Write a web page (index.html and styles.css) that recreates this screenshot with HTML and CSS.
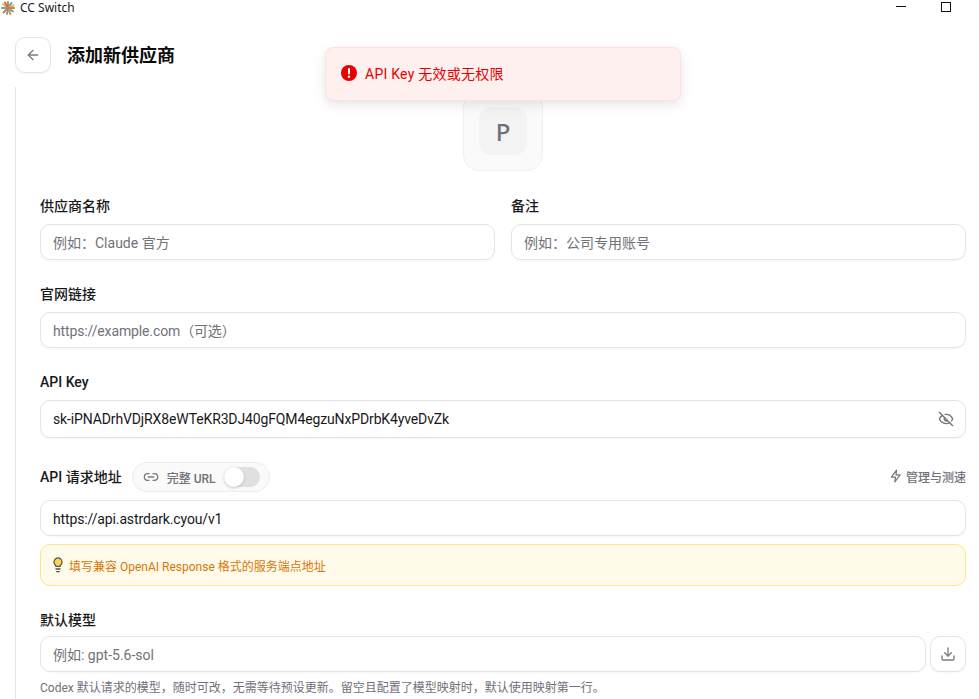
FILE: index.html
```html
<!DOCTYPE html>
<html lang="zh-CN">
<head>
  <meta charset="UTF-8">
  <meta name="viewport" content="width=device-width, initial-scale=1.0">
  <title>CC Switch</title>
  <link rel="stylesheet" href="styles.css">
</head>
<body>
  <div class="titlebar">
    <div class="app-name">
      <svg class="app-logo" width="14" height="14" viewBox="0 0 14 14" fill="none" stroke-width="2" stroke-linecap="round">
        <path d="M7 7V1" stroke="#e0803a"/>
        <path d="M7 7l3.500-5" stroke="#5f9ea8"/>
        <path d="M7 7l5.500-2.500" stroke="#f0b060"/>
        <path d="M7 7h6" stroke="#e07a3a"/>
        <path d="M7 7l5 3.500" stroke="#6aa5ad"/>
        <path d="M7 7l2.500 6" stroke="#e8953f"/>
        <path d="M7 7l-1 6" stroke="#6aa5ad"/>
        <path d="M7 7l-4.500 4.500" stroke="#e07a3a"/>
        <path d="M7 7H1" stroke="#6aa5ad"/>
        <path d="M7 7L2 3" stroke="#f0b060"/>
        <path d="M7 7L4 1.500" stroke="#b9785a"/>
      </svg>
      <span>CC Switch</span>
    </div>
    <div class="window-controls">
      <span class="win-min"></span>
      <span class="win-max"></span>
    </div>
  </div>

  <div class="page-header">
    <button class="back-btn">
      <svg width="16" height="16" viewBox="0 0 24 24" fill="none" stroke="#7a7a82" stroke-width="2" stroke-linecap="round" stroke-linejoin="round">
        <path d="M19 12H5"/>
        <path d="M12 19l-7-7 7-7"/>
      </svg>
    </button>
    <h1>添加新供应商</h1>
  </div>

  <div class="toast">
    <svg width="18" height="18" viewBox="0 0 18 18">
      <circle cx="9" cy="9" r="8" fill="#e60000"/>
      <rect x="8" y="4" width="2" height="6.500" rx="1" fill="#fff"/>
      <circle cx="9" cy="12.800" r="1.200" fill="#fff"/>
    </svg>
    <span>API Key 无效或无权限</span>
  </div>

  <div class="form-scroll">
    <div class="avatar-wrap">
      <div class="avatar-outer">
        <div class="avatar-inner">P</div>
      </div>
    </div>

    <div class="two-col">
      <div class="field">
        <label class="field-label">供应商名称</label>
        <input class="text-input" placeholder="例如：Claude 官方">
      </div>
      <div class="field">
        <label class="field-label">备注</label>
        <input class="text-input" placeholder="例如：公司专用账号">
      </div>
    </div>

    <div class="field">
      <label class="field-label">官网链接</label>
      <input class="text-input latin-input" placeholder="https://example.com（可选）">
    </div>

    <div class="field">
      <label class="field-label">API Key</label>
      <div class="input-with-icon">
        <input class="text-input latin-input key-input" value="sk-iPNADrhVDjRX8eWTeKR3DJ40gFQM4egzuNxPDrbK4yveDvZk">
        <svg class="eye-icon" width="16" height="16" viewBox="0 0 24 24" fill="none" stroke="#73737b" stroke-width="2" stroke-linecap="round" stroke-linejoin="round">
          <path d="M10.700 5.100A11 11 0 0 1 22 12a13 13 0 0 1-1.700 2.700"/>
          <path d="M14.100 14.200a3 3 0 0 1-4.200-4.200"/>
          <path d="M17.500 17.500A11 11 0 0 1 2 12a13 13 0 0 1 4.500-5.500"/>
          <path d="M2 2l20 20"/>
        </svg>
      </div>
    </div>

    <div class="field">
      <div class="url-head">
        <label class="field-label">API 请求地址</label>
        <div class="url-toggle">
          <svg width="16" height="16" viewBox="0 0 24 24" fill="none" stroke="#7a7a82" stroke-width="2" stroke-linecap="round">
            <path d="M9 17H7A5 5 0 0 1 7 7h2"/>
            <path d="M15 7h2a5 5 0 0 1 0 10h-2"/>
            <path d="M8 12h8"/>
          </svg>
          <span>完整 URL</span>
          <span class="switch"><span class="switch-thumb"></span></span>
        </div>
        <a class="manage-link">
          <svg width="14" height="14" viewBox="0 0 24 24" fill="none" stroke="#73737b" stroke-width="2" stroke-linecap="round" stroke-linejoin="round">
            <path d="M13 2L4 14h7l-1 8 9-12h-7z"/>
          </svg>
          管理与测速
        </a>
      </div>
      <input class="text-input latin-input" value="https://api.astrdark.cyou/v1">
      <div class="tip">
        <svg class="tip-bulb" width="16" height="16" viewBox="0 0 24 24" fill="#fcd34d" stroke="#57534e" stroke-width="2" stroke-linecap="round" stroke-linejoin="round">
          <path d="M15 14c.2-1 .7-1.700 1.500-2.500A6 6 0 1 0 7.500 11.500c.7.700 1.300 1.500 1.500 2.500z"/>
          <path d="M9 18h6"/>
          <path d="M10 22h4"/>
        </svg>
        <span>填写兼容 OpenAI Response 格式的服务端点地址</span>
      </div>
    </div>

    <div class="field field-model">
      <label class="field-label">默认模型</label>
      <div class="model-row">
        <input class="text-input" placeholder="例如: gpt-5.6-sol">
        <button class="fetch-btn">
          <svg width="16" height="16" viewBox="0 0 24 24" fill="none" stroke="#7a7a82" stroke-width="2" stroke-linecap="round" stroke-linejoin="round">
            <path d="M12 3v12"/>
            <path d="M7 10l5 5 5-5"/>
            <path d="M21 15v4a2 2 0 0 1-2 2H5a2 2 0 0 1-2-2v-4"/>
          </svg>
        </button>
      </div>
      <p class="hint">Codex 默认请求的模型，随时可改，无需等待预设更新。留空且配置了模型映射时，默认使用映射第一行。</p>
    </div>
  </div>
</body>
</html>
```

FILE: styles.css
```css
* {
  box-sizing: border-box;
}

html, body {
  height: 100%;
}

body {
  margin: 0;
  height: 699px;
  overflow: hidden;
  background-color: #fff;
  color: #111;
  font-family: Roboto, "Noto Sans CJK SC", sans-serif;
  font-size: 14px;
}

.titlebar {
  display: flex;
  justify-content: space-between;
  height: 37px;
}

.app-name {
  display: flex;
  align-items: flex-start;
  gap: 5px;
  padding-left: 1px;
  font-family: "Noto Sans", sans-serif;
  font-size: 12px;
  line-height: 15px;
  color: #1a1a1a;
}

.app-logo {
  margin-top: 1px;
}

.window-controls {
  position: relative;
  width: 100px;
}

.win-min {
  position: absolute;
  left: 17px;
  top: 6px;
  width: 10px;
  height: 1px;
  background-color: #111;
}

.win-max {
  position: absolute;
  left: 62px;
  top: 2px;
  width: 10px;
  height: 10px;
  border: 1px solid #111;
}

.page-header {
  display: flex;
  align-items: center;
  gap: 16px;
  height: 36px;
  padding-left: 15px;
}

.page-header h1 {
  margin: 0 0 2px;
  font-size: 18px;
  font-weight: 700;
  color: #0a0a0a;
}

.back-btn, .fetch-btn {
  display: flex;
  align-items: center;
  justify-content: center;
  width: 36px;
  height: 36px;
  padding: 0;
  flex-shrink: 0;
  background-color: #fff;
  border: 1px solid #e4e4e7;
  border-radius: 10px;
  box-shadow: 0 1px 2px rgba(0, 0, 0, 0.04);
}

.toast {
  position: absolute;
  left: 325px;
  top: 47px;
  display: flex;
  align-items: center;
  gap: 7px;
  width: 356px;
  height: 54px;
  padding-left: 14px;
  padding-bottom: 2px;
  background-color: #fff0f0;
  border: 1px solid #ffe0e1;
  border-radius: 8px;
  box-shadow: 0 4px 12px rgba(0, 0, 0, 0.1);
  color: #e60000;
  font-size: 14px;
  letter-spacing: 0.25px;
  z-index: 2;
}

.form-scroll {
  margin: 14px 13px 0 15px;
  padding-left: 24px;
  height: 612px;
  overflow: hidden;
  border-left: 1px solid #e4e4e7;
}

.avatar-wrap {
  display: flex;
  justify-content: center;
  height: 109px;
  padding-top: 4px;
}

.avatar-outer {
  display: flex;
  align-items: center;
  justify-content: center;
  width: 80px;
  height: 80px;
  background-color: #fafafa;
  border: 1px solid #f0f0f1;
  border-radius: 16px;
}

.avatar-inner {
  display: flex;
  align-items: center;
  justify-content: center;
  width: 48px;
  height: 48px;
  padding-top: 1px;
  background-color: #f3f3f4;
  border-radius: 12px;
  color: #71717a;
  font-family: "Noto Sans", sans-serif;
  font-size: 24px;
  font-weight: 500;
}

.two-col {
  display: grid;
  grid-template-columns: 1fr 1fr;
  gap: 16px;
}

.field {
  display: flex;
  flex-direction: column;
  gap: 8px;
  margin-bottom: 24px;
}

.field-label {
  font-size: 14px;
  line-height: 20px;
  font-weight: 500;
  color: #18181b;
}

.text-input {
  width: 100%;
  height: 36px;
  padding: 1px 12px 0;
  background-color: #fff;
  border: 1px solid #e4e4e7;
  border-radius: 10px;
  box-shadow: 0 1px 2px rgba(0, 0, 0, 0.04);
  color: #18181b;
  font-family: inherit;
  font-size: 14px;
  outline: none;
}

.text-input::placeholder {
  color: #71717a;
}

.latin-input {
  letter-spacing: -0.13px;
}

.key-input {
  display: block;
  height: 38px;
  padding-top: 0;
}

.input-with-icon {
  position: relative;
}

.eye-icon {
  position: absolute;
  right: 12px;
  top: 11px;
}

.url-head {
  display: flex;
  align-items: center;
  gap: 10px;
  height: 30px;
}

.url-toggle {
  display: flex;
  align-items: center;
  gap: 8px;
  height: 30px;
  padding: 0 9px 0 10px;
  background-color: #fafafa;
  border: 1px solid #ececee;
  border-radius: 15px;
  color: #71717a;
  font-size: 12px;
  font-weight: 500;
}

.switch {
  position: relative;
  width: 36px;
  height: 20px;
  background-color: #e0e0e3;
  border-radius: 10px;
}

.switch-thumb {
  position: absolute;
  left: 0;
  top: 0;
  width: 20px;
  height: 20px;
  background-color: #fff;
  border-radius: 50%;
  box-shadow: 0 1px 3px rgba(0, 0, 0, 0.2);
}

.manage-link {
  display: flex;
  align-items: center;
  gap: 3px;
  margin-left: auto;
  margin-bottom: 2px;
  color: #71717a;
  font-size: 12px;
  font-weight: 500;
}

.tip {
  display: flex;
  align-items: center;
  gap: 3px;
  height: 42px;
  padding-left: 12px;
  background-color: #fffbeb;
  border: 1px solid #fde68a;
  border-radius: 10px;
  color: #d97706;
  font-size: 12px;
}

.tip-bulb {
  margin-left: -3px;
}

.field-model {
  gap: 6px;
}

.model-row {
  display: flex;
  gap: 4px;
}

.hint {
  margin: 2px 0 0;
  color: #71717a;
  font-size: 12px;
  line-height: 16px;
  white-space: nowrap;
}
```
